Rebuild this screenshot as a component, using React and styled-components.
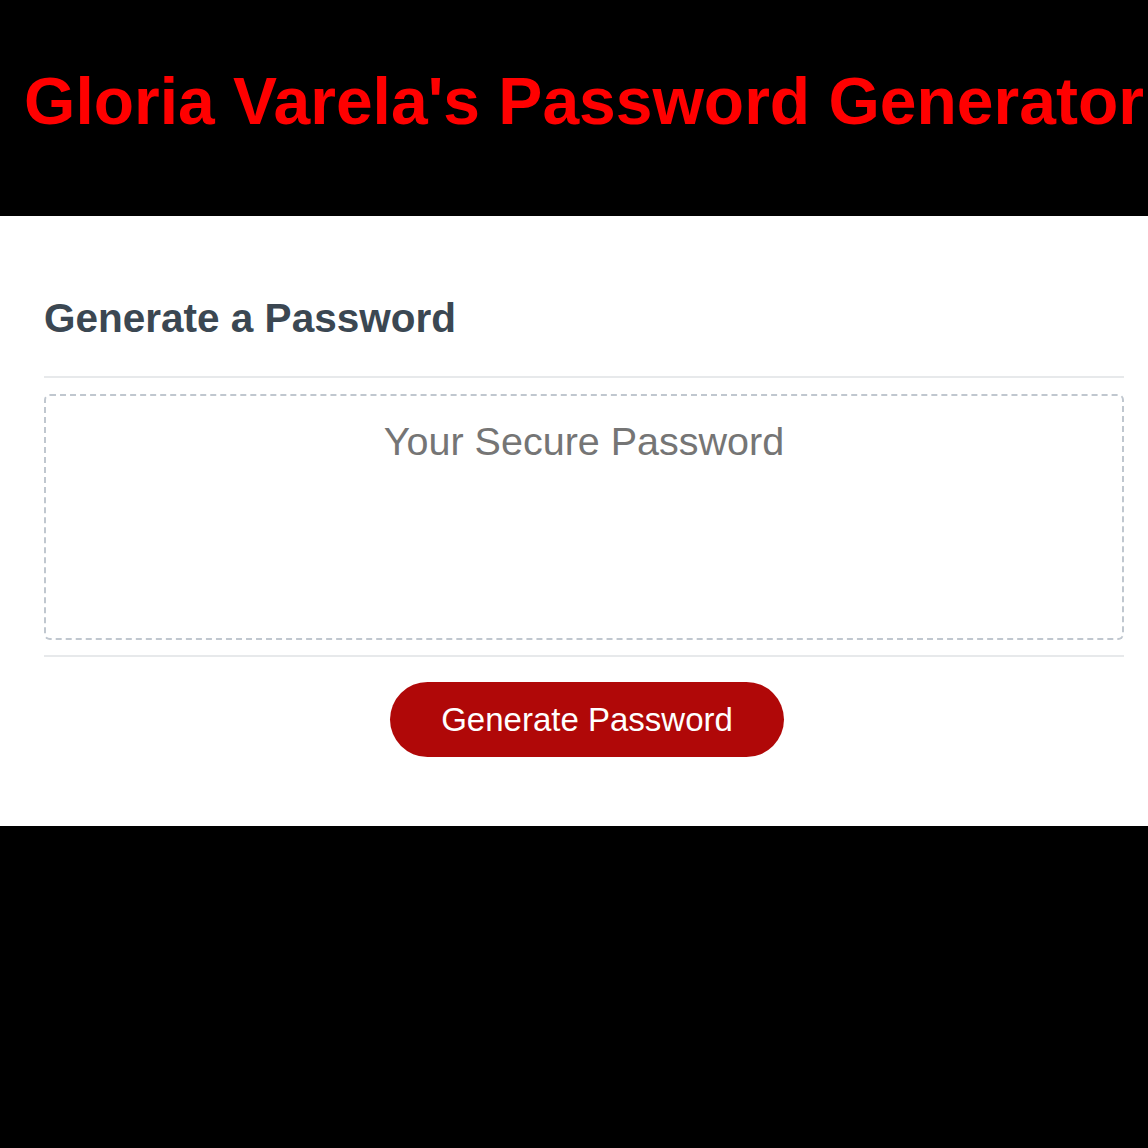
import styled, { createGlobalStyle } from "styled-components";

const GlobalStyle = createGlobalStyle`
  *, *::before, *::after {
    box-sizing: border-box;
  }

  html, body {
    margin: 0;
    padding: 0;
    background-color: #000;
    overflow: hidden;
    font-family: "Liberation Sans", Arial, sans-serif;
  }
`;

const App = () => {
  return (
    <>
      <GlobalStyle />
      <Wrapper>
        <Header>
          <Title>Gloria Varela's Password Generator</Title>
        </Header>
        <Card>
          <CardHeader>
            <H2>Generate a Password</H2>
          </CardHeader>
          <Divider />
          <Password
            readOnly
            placeholder="Your Secure Password"
            aria-label="Generated Password"
          />
          <Divider $gap={15} />
          <CardFooter>
            <Button type="button">Generate Password</Button>
          </CardFooter>
        </Card>
      </Wrapper>
    </>
  );
};

export default App;

const Wrapper = styled.div`
  width: 1168px;
  display: flex;
  flex-direction: column;
`;

const Header = styled.header`
  height: 216px;
  padding-top: 63px;
  text-align: center;
  background-color: #000;
`;

const Title = styled.h1`
  margin: 0;
  font-size: 66px;
  font-weight: bold;
  line-height: 76px;
  color: #ff0000;
  white-space: nowrap;
`;

const Card = styled.section`
  height: 610px;
  background-color: #fff;
  padding: 79px 44px 0;
  color: #3b4752;
`;

const CardHeader = styled.div`
  display: flex;
`;

const H2 = styled.h2`
  margin: 0;
  font-size: 40.5px;
  line-height: 46px;
  font-weight: bold;
  color: #3b4752;
`;

const Divider = styled.div`
  height: 2px;
  width: 100%;
  background: #e7e9eb;
  margin-top: ${(props) => (props.$gap ? `${props.$gap}px` : "35px")};
`;

const Password = styled.textarea`
  appearance: none;
  display: block;
  width: 100%;
  height: 246px;
  margin-top: 16px;
  padding: 23px 15px 0;
  border: 2px dashed #c0c7cf;
  border-radius: 6px;
  resize: none;
  overflow: hidden;
  font-family: "Liberation Sans", Arial, sans-serif;
  font-size: 39.5px;
  text-align: center;
  color: #3b4752;
  outline: none;

  &::placeholder {
    color: #757575;
  }
`;

const CardFooter = styled.div`
  display: flex;
  justify-content: center;
  padding-top: 25px;
  padding-left: 6px;
`;

const Button = styled.button`
  border: none;
  height: 75px;
  padding: 0 51px;
  border-radius: 38px;
  background-color: #b00808;
  color: #fff;
  font-family: "Liberation Sans", Arial, sans-serif;
  font-size: 33px;
  line-height: 33px;
  cursor: pointer;
`;
